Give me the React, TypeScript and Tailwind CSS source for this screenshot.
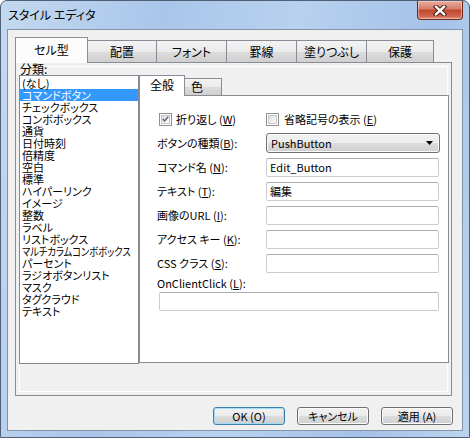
import React from 'react';

const FONT = "font-['Noto_Sans_CJK_JP','Noto_Sans_CJK_SC',sans-serif] [font-feature-settings:'palt']";

const categories = [
  '(なし)',
  'コマンドボタン',
  'チェックボックス',
  'コンボボックス',
  '通貨',
  '日付時刻',
  '倍精度',
  '空白',
  '標準',
  'ハイパーリンク',
  'イメージ',
  '整数',
  'ラベル',
  'リストボックス',
  'マルチカラムコンボボックス',
  'パーセント',
  'ラジオボタンリスト',
  'マスク',
  'タグクラウド',
  'テキスト',
];

const outerTabs = [
  { label: '配置', w: 'w-[70px]' },
  { label: 'フォント', w: 'w-[71px]' },
  { label: '罫線', w: 'w-[71px]' },
  { label: '塗りつぶし', w: 'w-[71px]' },
  { label: '保護', w: 'w-[68px]' },
];

function Key({ k }: { k: string }) {
  return (
    <>
      (<span className="underline underline-offset-1">{k}</span>)
    </>
  );
}

function CheckBox({ checked }: { checked?: boolean }) {
  return (
    <div className="w-[13px] h-[13px] border border-[#8e8f8f] bg-white p-[1px] shrink-0">
      <div className="w-full h-full border border-[#c6c6c6] bg-[linear-gradient(135deg,#dcdcdc_0%,#f4f4f4_70%,#ffffff_100%)] flex items-center justify-center">
        {checked && (
          <svg width="9" height="8" viewBox="0 0 9 8">
            <path d="M1 4 L3.5 6.5 L8 1" fill="none" stroke="#4d6185" strokeWidth="1.8" />
          </svg>
        )}
      </div>
    </div>
  );
}

function TextBox({ value, wide }: { value?: string; wide?: boolean }) {
  return (
    <div
      className={`${wide ? 'w-[280px]' : 'w-[173px]'} h-[19px] rounded-[2px] border border-[#c9ccd2] border-t-[#abadb3] bg-white flex items-center px-[3px] text-[11px] leading-[12px] text-black`}
    >
      {value}
    </div>
  );
}

function Row({ label, children }: { label: React.ReactNode; children: React.ReactNode }) {
  return (
    <div className="flex items-center h-[24px]">
      <div className="w-[109px] text-[11px] leading-[12px]">{label}</div>
      {children}
    </div>
  );
}

function DialogButton({ children, primary }: { children: React.ReactNode; primary?: boolean }) {
  return (
    <div
      className={`w-[72px] h-[18px] rounded-[3px] border ${
        primary ? 'border-[#3c7fb1] shadow-[inset_0_0_0_1px_#9fdcf7]' : 'border-[#707070] shadow-[inset_0_0_0_1px_#fbfbfb]'
      } bg-[linear-gradient(180deg,#f2f2f2_0%,#ebebeb_49%,#dddddd_50%,#cfcfcf_100%)] flex items-center justify-center text-[11px] leading-[12px]`}
    >
      {children}
    </div>
  );
}

export default function App() {
  return (
    <div
      className={`${FONT} w-[470px] h-[438px] flex flex-col rounded-t-[7px] border border-[#4f6076] bg-[linear-gradient(100deg,#c4d9f0_0%,#a9c6ea_30%,#b8d1ee_55%,#a4c2e8_80%,#bcd4ee_100%)] text-black relative overflow-hidden`}
    >
      {/* Title bar */}
      <div className="h-[28px] flex items-center pl-[7px] text-[12px] leading-[12px] shrink-0">スタイル エディタ</div>
      <div className="absolute right-[6px] top-0 w-[46px] h-[19px] rounded-b-[4px] border border-t-0 border-[#6b2b24] bg-[linear-gradient(180deg,#e9ad9f_0%,#d67a68_45%,#c2462f_50%,#cf6650_85%,#e3977f_100%)] shadow-[inset_0_0_0_1px_rgba(255,220,210,0.5)] flex items-center justify-center">
        <svg width="14" height="11" viewBox="0 0 14 11">
          <path d="M3 1.8 L11 9.2 M11 1.8 L3 9.2" stroke="#4b1c16" strokeWidth="4.4" strokeLinecap="square" />
          <path d="M3 1.8 L11 9.2 M11 1.8 L3 9.2" stroke="#ffffff" strokeWidth="2.4" strokeLinecap="square" />
        </svg>
      </div>

      {/* Client area */}
      <div className="mx-[6px] h-[402px] border border-[#8293aa] bg-[#f0f0f0] pl-[7px] pt-[7px] flex flex-col shrink-0">
        {/* Outer tab strip */}
        <div className="flex items-end h-[25px]">
          <div className="relative z-10 w-[73px] h-[26px] -mb-px border border-b-0 border-[#898c95] bg-[#fcfcfc] flex items-center justify-center text-[12px] leading-[12px] pb-[2px]">
            セル型
          </div>
          {outerTabs.map((t) => (
            <div
              key={t.label}
              className={`${t.w} h-[22px] -ml-px border border-b-0 border-[#898c95] bg-[linear-gradient(180deg,#f3f3f3_0%,#ebebeb_50%,#dddddd_51%,#cfcfcf_100%)] flex items-center justify-center text-[12px] leading-[12px] pt-[1px]`}
            >
              {t.label}
            </div>
          ))}
        </div>

        {/* Outer panel */}
        <div className="w-[437px] h-[334px] border border-[#898c95] bg-[#f0f0f0] shadow-[inset_0_0_0_3px_#f0f0f0,inset_0_0_0_4px_#ffffff]">
          <div className="h-[12px] pl-[4px] text-[12px] leading-[12px]">分類:</div>
          <div className="flex pl-[3px]">
            {/* Category list */}
            <div className="w-[120px] h-[289px] border border-[#828790] bg-white py-[1px] shrink-0 overflow-hidden">
              {categories.map((c, i) => (
                <div
                  key={c}
                  className={`h-[12px] leading-[12px] text-[11px] pl-[2px] whitespace-nowrap ${
                    i === 1 ? 'bg-[#3399ff] text-white' : ''
                  }`}
                >
                  {c.length > 10 ? (
                    <span className="inline-block origin-left scale-x-[0.84]">{c}</span>
                  ) : (
                    c
                  )}
                </div>
              ))}
            </div>

            {/* Inner tab control */}
            <div className="w-[310px] flex flex-col">
              <div className="flex items-end h-[20px]">
                <div className="relative z-10 w-[46px] h-[21px] -mb-px border border-b-0 border-[#898c95] bg-white flex items-center justify-center text-[12px] leading-[12px] pb-[2px]">
                  全般
                </div>
                <div className="w-[38px] h-[17px] -ml-px border border-b-0 border-[#898c95] bg-[linear-gradient(180deg,#f3f3f3_0%,#ebebeb_50%,#dddddd_51%,#cfcfcf_100%)] flex items-center pl-[6px] text-[12px] leading-[12px]">
                  色
                </div>
              </div>
              <div className="h-[268px] border border-[#898c95] bg-white pl-[17px] pt-[14px]">
                <div className="flex items-center h-[18px]">
                  <div className="w-[109px] flex items-center pl-[2px] gap-[4px] text-[11px] leading-[12px]">
                    <CheckBox checked />
                    <span>
                      折り返し <Key k="W" />
                    </span>
                  </div>
                  <div className="flex items-center gap-[5px] text-[11px] leading-[12px]">
                    <CheckBox />
                    <span>
                      省略記号の表示 <Key k="E" />
                    </span>
                  </div>
                </div>
                <div className="h-[3px]" />
                <Row
                  label={
                    <>
                      ボタンの種類<Key k="B" />:
                    </>
                  }
                >
                  <div className="w-[174px] h-[20px] rounded-[3px] border border-[#707070] shadow-[inset_0_0_0_1px_#fbfbfb] bg-[linear-gradient(180deg,#f2f2f2_0%,#ebebeb_49%,#dddddd_50%,#cfcfcf_100%)] flex items-center justify-between pl-[4px] pr-[6px] text-[11px] leading-[12px]">
                    <span>PushButton</span>
                    <svg width="7" height="4" viewBox="0 0 7 4">
                      <path d="M0 0 H7 L3.5 4 Z" fill="#000" />
                    </svg>
                  </div>
                </Row>
                <Row
                  label={
                    <>
                      コマンド名 <Key k="N" />:
                    </>
                  }
                >
                  <TextBox value="Edit_Button" />
                </Row>
                <Row
                  label={
                    <>
                      テキスト <Key k="T" />:
                    </>
                  }
                >
                  <TextBox value="編集" />
                </Row>
                <Row
                  label={
                    <>
                      画像のURL <Key k="I" />:
                    </>
                  }
                >
                  <TextBox />
                </Row>
                <Row
                  label={
                    <>
                      アクセス キー <Key k="K" />:
                    </>
                  }
                >
                  <TextBox />
                </Row>
                <Row
                  label={
                    <>
                      CSS クラス <Key k="S" />:
                    </>
                  }
                >
                  <TextBox />
                </Row>
                <div className="h-[16px] flex items-center text-[11px] leading-[12px]">
                  OnClientClick <Key k="L" />:
                </div>
                <div className="mt-[1px] pl-[2px]">
                  <TextBox wide />
                </div>
              </div>
            </div>
          </div>
        </div>

        {/* Dialog buttons */}
        <div className="w-[438px] mt-[11px] flex justify-end gap-[12px]">
          <DialogButton primary>OK (O)</DialogButton>
          <DialogButton>キャンセル</DialogButton>
          <DialogButton>適用 (A)</DialogButton>
        </div>
      </div>
    </div>
  );
}
